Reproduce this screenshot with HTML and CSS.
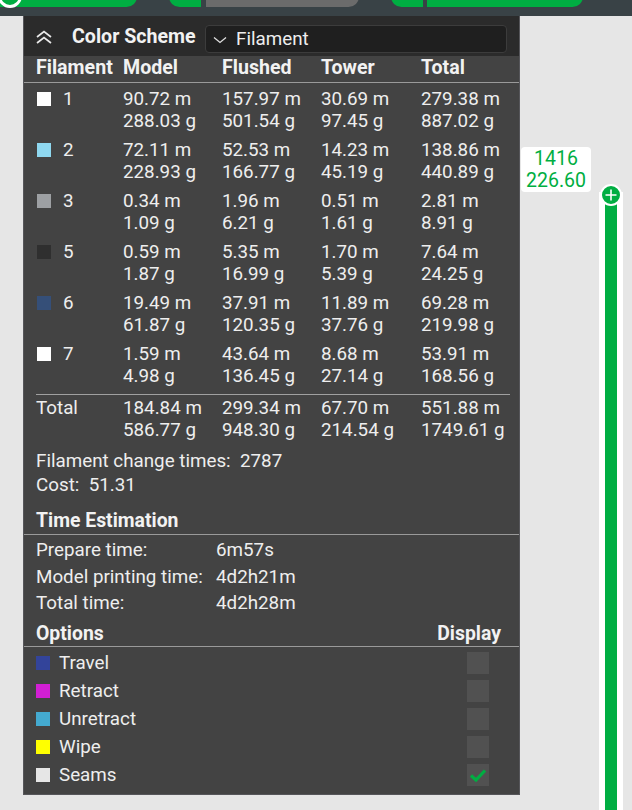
FILE: index.html
```html
<!DOCTYPE html>
<html>
<head>
    <title>Preview</title>
    <link rel="stylesheet" href="styles.css">
</head>
<body>
    <div class="topbar">
        <div class="pill pill-a"><span class="ring"></span></div>
        <div class="pill pill-b"></div>
        <div class="pill pill-c"></div>
        <div class="pill pill-d"></div>
        <div class="pill pill-e"></div>
    </div>

    <div class="canvas">
        <div class="legend">
            <div class="legend-head">
                <svg class="collapse" width="18" height="14" viewBox="0 0 18 14">
                    <path d="M2 7 L9 1.5 L16 7 M2 13 L9 7.5 L16 13" fill="none" stroke="#eaeaea" stroke-width="1.7"/>
                </svg>
                <span class="head-title">Color Scheme</span>
                <div class="combo">
                    <svg width="14" height="8" viewBox="0 0 14 8">
                        <path d="M1 1.5 L7 6.5 L13 1.5" fill="none" stroke="#e0e0e0" stroke-width="1.3"/>
                    </svg>
                    <span>Filament</span>
                </div>
            </div>

            <div class="grid grid-head">
                <span>Filament</span><span>Model</span><span>Flushed</span><span>Tower</span><span>Total</span>
            </div>
            <div class="rule"></div>

            <div class="rows">
                <div class="grid frow">
                    <span class="fid"><i class="sw" style="background:#ffffff"></i>1</span>
                    <span>90.72 m<br>288.03 g</span><span>157.97 m<br>501.54 g</span><span>30.69 m<br>97.45 g</span><span>279.38 m<br>887.02 g</span>
                </div>
                <div class="grid frow">
                    <span class="fid"><i class="sw" style="background:#8fd8f0"></i>2</span>
                    <span>72.11 m<br>228.93 g</span><span>52.53 m<br>166.77 g</span><span>14.23 m<br>45.19 g</span><span>138.86 m<br>440.89 g</span>
                </div>
                <div class="grid frow">
                    <span class="fid"><i class="sw" style="background:#9da0a3"></i>3</span>
                    <span>0.34 m<br>1.09 g</span><span>1.96 m<br>6.21 g</span><span>0.51 m<br>1.61 g</span><span>2.81 m<br>8.91 g</span>
                </div>
                <div class="grid frow">
                    <span class="fid"><i class="sw" style="background:#2f2f2f"></i>5</span>
                    <span>0.59 m<br>1.87 g</span><span>5.35 m<br>16.99 g</span><span>1.70 m<br>5.39 g</span><span>7.64 m<br>24.25 g</span>
                </div>
                <div class="grid frow">
                    <span class="fid"><i class="sw" style="background:#354f78"></i>6</span>
                    <span>19.49 m<br>61.87 g</span><span>37.91 m<br>120.35 g</span><span>11.89 m<br>37.76 g</span><span>69.28 m<br>219.98 g</span>
                </div>
                <div class="grid frow">
                    <span class="fid"><i class="sw" style="background:#ffffff"></i>7</span>
                    <span>1.59 m<br>4.98 g</span><span>43.64 m<br>136.45 g</span><span>8.68 m<br>27.14 g</span><span>53.91 m<br>168.56 g</span>
                </div>
            </div>

            <div class="rule rule-inset"></div>

            <div class="grid frow total-row">
                <span>Total</span>
                <span>184.84 m<br>586.77 g</span><span>299.34 m<br>948.30 g</span><span>67.70 m<br>214.54 g</span><span>551.88 m<br>1749.61 g</span>
            </div>

            <div class="stat stat-first">Filament change times:&nbsp; 2787</div>
            <div class="stat">Cost:&nbsp; 51.31</div>

            <div class="section-title">Time Estimation</div>
            <div class="rule"></div>
            <div class="times">
                <span>Prepare time:</span><span>6m57s</span>
                <span>Model printing time:</span><span>4d2h21m</span>
                <span>Total time:</span><span>4d2h28m</span>
            </div>

            <div class="section-title options-title">
                <span>Options</span><span>Display</span>
            </div>
            <div class="rule"></div>
            <div class="options">
                <div class="opt"><i class="sw" style="background:#33449a"></i><span>Travel</span><b class="check"></b></div>
                <div class="opt"><i class="sw" style="background:#d21fd4"></i><span>Retract</span><b class="check"></b></div>
                <div class="opt"><i class="sw" style="background:#44aad0"></i><span>Unretract</span><b class="check"></b></div>
                <div class="opt"><i class="sw" style="background:#ffff00"></i><span>Wipe</span><b class="check"></b></div>
                <div class="opt"><i class="sw" style="background:#e6e6e6"></i><span>Seams</span>
                    <b class="check">
                        <svg width="22" height="22" viewBox="0 0 22 22">
                            <path d="M4 11.5 L9 16 L18 6.5" fill="none" stroke="#00ae42" stroke-width="3.2"/>
                        </svg>
                    </b>
                </div>
            </div>
        </div>

        <div class="slider">
            <div class="tip">1416<br>226.60</div>
            <div class="track"></div>
            <div class="knob">
                <svg width="12" height="12" viewBox="0 0 12 12">
                    <path d="M6 0.5 V11.5 M0.5 6 H11.5" stroke="#fff" stroke-width="1.6"/>
                </svg>
            </div>
        </div>
    </div>
</body>
</html>
```
FILE: styles.css
```css
body {
    margin: 0;
    background: #e6e6e6;
    font-family: Roboto, "Noto Sans", sans-serif;
    color: #eeeeee;
    height: 810px;
    overflow: hidden;
}

.topbar {
    height: 16px;
    background: #394246;
    position: relative;
    overflow: hidden;
}

.pill {
    position: absolute;
    top: -14px;
    height: 21px;
    background: #00ae42;
}

.pill-a {
    left: -30px;
    width: 167px;
    border-radius: 0 12px 12px 0;
}

.ring {
    position: absolute;
    left: 28px;
    top: -2px;
    width: 18px;
    height: 18px;
    border: 3px solid #fff;
    border-radius: 50%;
}

.pill-b {
    left: 169px;
    width: 32px;
    border-radius: 12px 0 0 12px;
}

.pill-c {
    left: 206px;
    width: 153px;
    background: #6b6b6b;
    border-radius: 0 12px 12px 0;
}

.pill-d {
    left: 391px;
    width: 32px;
    border-radius: 12px 0 0 12px;
}

.pill-e {
    left: 427px;
    width: 156px;
    border-radius: 0 12px 12px 0;
}

.canvas {
    position: relative;
    height: 794px;
}

.legend {
    margin-left: 23px;
    width: 495px;
    height: 778px;
    background: #434343;
    border: 1px solid #56565a;
    border-top: none;
    font-size: 18.8px;
}

.legend-head {
    height: 40px;
    background: #2b2b2b;
    display: flex;
    align-items: center;
    padding-left: 11px;
}

.collapse {
    margin-right: 19px;
    margin-top: 1px;
}

.head-title {
    font-weight: bold;
    font-size: 19.6px;
    color: #f2f2f2;
    width: 133px;
}

.combo {
    width: 302px;
    height: 28px;
    box-sizing: border-box;
    border: 1px solid #3c3c3c;
    border-radius: 4px;
    background: #1f1f1f;
    display: flex;
    align-items: center;
    padding-left: 7px;
    gap: 9px;
    margin-top: 6px;
    font-size: 18.8px;
}

.combo svg {
    margin-top: 2px;
}

.grid {
    display: grid;
    grid-template-columns: 87px 99px 99px 100px 1fr;
    padding-left: 12px;
}

.grid-head {
    height: 26px;
    line-height: 24px;
    font-weight: bold;
    font-size: 19.6px;
    color: #f2f2f2;
}

.rule {
    height: 1px;
    background: #9a9a9a;
}

.rule-inset {
    margin: 7px 9px 0 12px;
    background: #a0a0a0;
}

.rows {
    padding-top: 5px;
}

.frow {
    line-height: 22px;
    margin-bottom: 7px;
}

.fid {
    display: flex;
    align-items: flex-start;
}

.sw {
    display: inline-block;
    width: 14px;
    height: 14px;
    margin: 4px 12px 0 1px;
}

.total-row {
    margin-top: 2px;
    margin-bottom: 8px;
}

.stat {
    padding-left: 12px;
    line-height: 24px;
}

.section-title {
    padding-left: 12px;
    font-weight: bold;
    font-size: 19.4px;
    line-height: 26px;
    margin-top: 11px;
    color: #f2f2f2;
}

.times {
    display: grid;
    grid-template-columns: 180px 1fr;
    padding: 2px 0 0 12px;
    line-height: 26.5px;
}

.options-title {
    display: flex;
    justify-content: space-between;
    padding-right: 18px;
    margin-top: 4px;
    line-height: 25px;
}

.options {
    padding-top: 2px;
}

.opt {
    display: flex;
    align-items: center;
    height: 28px;
    padding-left: 12px;
}

.opt .sw {
    margin: 0 9px 0 0;
}

.opt span {
    flex: 1;
}

.check {
    width: 22px;
    height: 22px;
    background: #515151;
    margin-right: 30px;
    display: block;
}

.slider {
    position: absolute;
    left: 521px;
    top: 131px;
    width: 111px;
    height: 670px;
}

.tip {
    position: absolute;
    left: 0;
    top: 0;
    width: 70px;
    height: 45px;
    background: #fff;
    border-radius: 4px;
    color: #00ae42;
    text-align: center;
    font-size: 19.5px;
    line-height: 22px;
    padding-top: 1px;
    box-sizing: border-box;
}

.track {
    position: absolute;
    left: 78px;
    top: 45px;
    width: 12px;
    height: 640px;
    background: #00ae42;
    border-left: 6px solid #fff;
    border-right: 6px solid #fff;
}

.knob {
    position: absolute;
    left: 79px;
    top: 37px;
    width: 18px;
    height: 18px;
    border: 2px solid #fff;
    border-radius: 50%;
    background: #00ae42;
    display: flex;
    align-items: center;
    justify-content: center;
}
```
